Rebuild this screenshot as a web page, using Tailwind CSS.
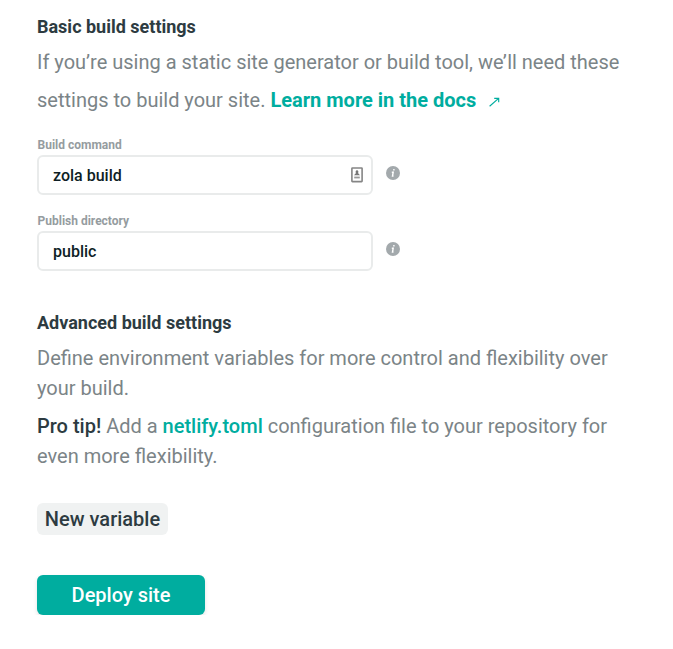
<!DOCTYPE html>
<html lang="en">
<head>
<meta charset="utf-8">
<title>Build settings</title>
<script src="https://cdn.jsdelivr.net/npm/@tailwindcss/browser@4"></script>
</head>
<body class="bg-white font-['Roboto',sans-serif] text-[20px] text-[#7b8487]">
<main class="flex w-[673px] flex-col items-start px-[37px] pt-[12px]">
  <h2 class="text-[18px] leading-[30px] font-bold text-[#2d3b41]">Basic build settings</h2>
  <p class="mt-px leading-[38px] whitespace-nowrap">If you’re using a static site generator or build tool, we’ll need these<br>settings to build your site. <a class="font-bold text-[#00ad9f]">Learn more in the docs<svg class="ml-[13px] inline-block" width="12" height="10" viewBox="0 0 12 10" fill="none" stroke="currentColor"><path d="M.6 9.2 9.6 1.4M5.2 1.3h4.5v4" stroke-width="1.15"/></svg></a></p>
  <label class="mt-[18px] pl-[0.5px] text-[12px] leading-[16px] font-bold text-[#959c9f]">Build command</label>
  <div class="mt-[2px] flex gap-[13px]">
    <div class="flex h-[40px] w-[336px] items-center justify-between rounded-[6px] border-2 border-[#e9ebeb] pr-[8px] pl-[14px] text-[16px] font-medium text-[#0e1e25]"><span class="pt-px">zola build</span>
      <svg width="12" height="16" viewBox="0 0 12 16"><rect x=".9" y="1" width="10.2" height="13.6" rx=".5" fill="#fff" stroke="#858585" stroke-width="1.6"/><path d="M6 3.4a1.2 1.5 0 0 1 1 2.6L9 8.2H3L5 6a1.2 1.5 0 0 1 1-2.6z" fill="#777"/><path d="M3.2 10.5h5.6" stroke="#999" stroke-width="1.8"/></svg></div>
    <svg class="mt-[11px]" width="14" height="14" viewBox="0 0 14 14"><circle cx="7" cy="7" r="7" fill="#a3a9ac"/><path d="M7.2 3.7h1.4M5.8 6.2h1.4L6.5 10h1" fill="none" stroke="#fff" stroke-width="1.4"/></svg>
  </div>
  <label class="mt-[18px] pl-[0.5px] text-[12px] leading-[16px] font-bold text-[#959c9f]">Publish directory</label>
  <div class="mt-[2px] flex gap-[13px]">
    <div class="flex h-[40px] w-[336px] items-center rounded-[6px] border-2 border-[#e9ebeb] pl-[14px] text-[16px] font-medium text-[#0e1e25]"><span class="pt-px">public</span></div>
    <svg class="mt-[11px]" width="14" height="14" viewBox="0 0 14 14"><circle cx="7" cy="7" r="7" fill="#a3a9ac"/><path d="M7.2 3.7h1.4M5.8 6.2h1.4L6.5 10h1" fill="none" stroke="#fff" stroke-width="1.4"/></svg>
  </div>
  <h2 class="mt-[37px] text-[18px] leading-[30px] font-bold text-[#2d3b41]">Advanced build settings</h2>
  <p class="mt-[5px] leading-[30px] whitespace-nowrap">Define environment variables for more control and flexibility over<br>your build.</p>
  <p class="mt-[8px] leading-[30px] whitespace-nowrap"><b class="font-medium text-[#2d3b41]">Pro tip!</b> Add a <a class="font-medium text-[#00ad9f]">netlify.toml</a> configuration file to your repository for<br>even more flexibility.</p>
  <button class="mt-[32px] h-[32px] w-[131px] rounded-[6px] bg-[#f0f2f2] leading-[32px] font-medium text-[#2d3b41]">New variable</button>
  <button class="mt-[40px] h-[40px] w-[168px] rounded-[6px] bg-[#00ad9f] leading-[40px] font-medium text-white shadow-[0_2px_4px_rgba(14,30,37,0.12)]">Deploy site</button>
</main>
</body>
</html>
